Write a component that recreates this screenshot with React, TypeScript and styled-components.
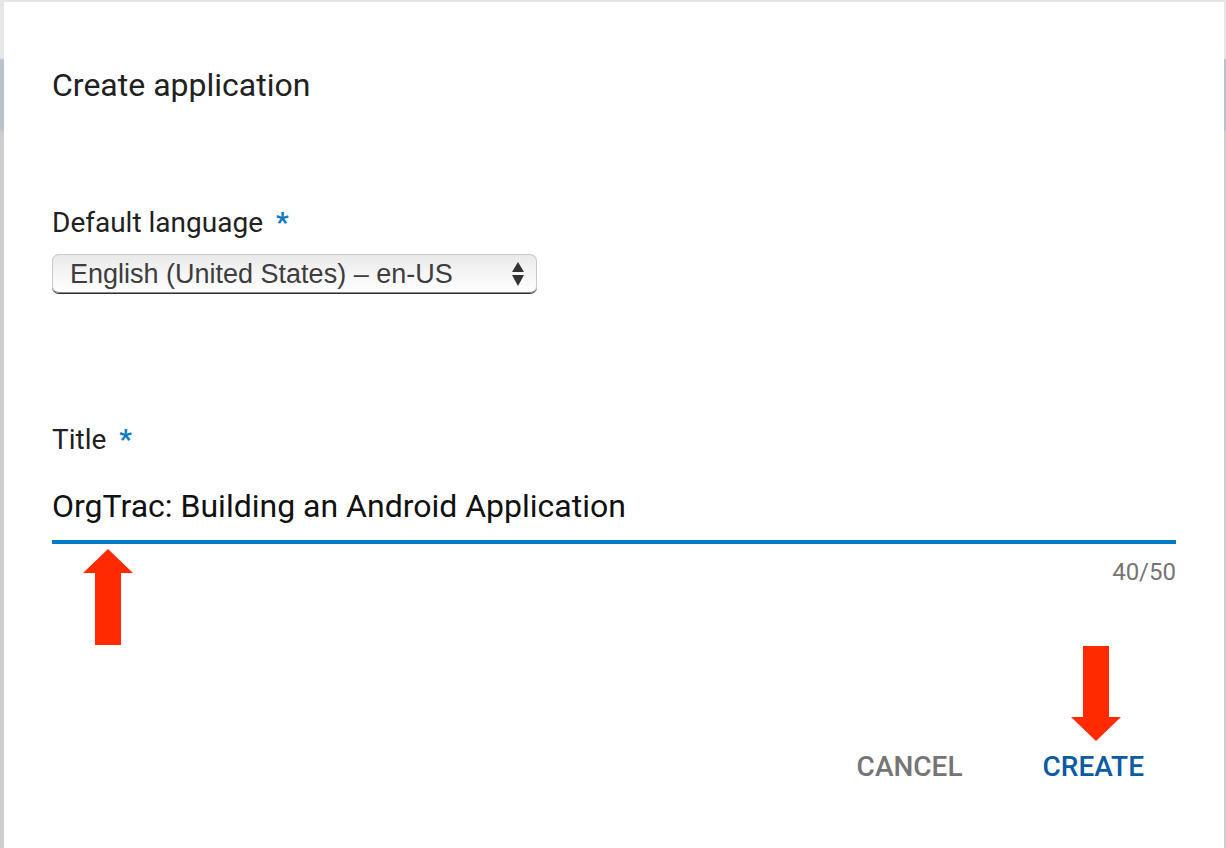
import React from "react";
import styled, { createGlobalStyle } from "styled-components";

const Global = createGlobalStyle`
  html, body { margin: 0; padding: 0; }
  body {
    width: 1226px;
    height: 848px;
    overflow: hidden;
    background: linear-gradient(
      to bottom,
      #e6e6e6 0px, #e6e6e6 58px,
      #b8c2cf 60px, #b8c2cf 130px,
      #cdcdcd 132px, #cdcdcd 100%
    );
    font-family: Roboto, "Noto Sans", Arial, sans-serif;
  }
  #root { height: 848px; }
`;

const Dialog = styled.div`
  position: relative;
  box-sizing: border-box;
  margin: 2px 2px 0 4px;
  height: 846px;
  background: #ffffff;
  padding: 63px 48px 0 48px;
  display: flex;
  flex-direction: column;
`;

const Heading = styled.h1`
  margin: 0;
  font-size: 32px;
  line-height: 40px;
  font-weight: 400;
  color: #212121;
`;

const Label = styled.div<{ $top: number }>`
  margin-top: ${(p) => p.$top}px;
  font-size: 28px;
  line-height: 36px;
  color: #212121;
  display: flex;
  gap: 13px;
`;

const Star = styled.span`
  color: #0a7ac2;
  font-weight: 700;
`;

const Select = styled.div`
  margin-top: 13px;
  box-sizing: border-box;
  width: 485px;
  height: 39px;
  border-radius: 7px;
  border: 1px solid #c9c9c9;
  border-bottom: 1px solid #8a8a8a;
  box-shadow: 0 1px 0 #2e2e2e;
  background: linear-gradient(to bottom, #e9e9e9 0%, #f4f4f4 45%, #ffffff 100%);
  display: flex;
  align-items: center;
  justify-content: space-between;
  padding: 0 11px 0 17px;
  font-family: "Liberation Sans", Arial, sans-serif;
  font-size: 27px;
  color: #3d3d3d;
`;

const SelectText = styled.span`
  line-height: 37px;
  padding-top: 1px;
`;

const TitleInput = styled.div`
  margin-top: 28px;
  font-size: 32px;
  line-height: 40px;
  color: #111111;
  padding-bottom: 14px;
  border-bottom: 4px solid #0277c3;
`;

const Counter = styled.div`
  margin-top: 14px;
  align-self: flex-end;
  font-size: 24px;
  line-height: 28px;
  color: #757575;
`;

const Actions = styled.div`
  margin-top: 163px;
  display: flex;
  justify-content: flex-end;
  gap: 80px;
  padding-right: 32px;
`;

const ActionButton = styled.button<{ $primary?: boolean }>`
  background: none;
  border: none;
  padding: 0;
  font-family: Roboto, sans-serif;
  font-size: 28px;
  line-height: 36px;
  font-weight: 500;
  color: ${(p) => (p.$primary ? "#0b5ba3" : "#757575")};
  cursor: pointer;
`;

const Annotation = styled.svg<{ $left: number; $top: number }>`
  position: absolute;
  left: ${(p) => p.$left}px;
  top: ${(p) => p.$top}px;
`;

function SelectArrows() {
  return (
    <svg width="14" height="26" viewBox="0 0 14 26">
      <polygon points="7,1 13,11 1,11" fill="#333" />
      <polygon points="1,14 13,14 7,25" fill="#333" />
    </svg>
  );
}

export default function App() {
  return (
    <>
      <Global />
      <Dialog>
        <Heading>Create application</Heading>
        <Label $top={100}>
          <span>Default language</span>
          <Star>*</Star>
        </Label>
        <Select>
          <SelectText>English (United States) – en-US</SelectText>
          <SelectArrows />
        </Select>
        <Label $top={129}>
          <span>Title</span>
          <Star>*</Star>
        </Label>
        <TitleInput>OrgTrac: Building an Android Application</TitleInput>
        <Counter>40/50</Counter>
        <Actions>
          <ActionButton>CANCEL</ActionButton>
          <ActionButton $primary>CREATE</ActionButton>
        </Actions>

        <Annotation $left={79} $top={547} width="50" height="96" viewBox="0 0 50 96">
          <polygon points="25,0 50,24 38,24 38,96 12,96 12,24 0,24" fill="#ff2a00" />
        </Annotation>
        <Annotation $left={1067} $top={644} width="50" height="95" viewBox="0 0 50 95">
          <polygon points="12,0 38,0 38,71 50,71 25,95 0,71 12,71" fill="#ff2a00" />
        </Annotation>
      </Dialog>
    </>
  );
}
